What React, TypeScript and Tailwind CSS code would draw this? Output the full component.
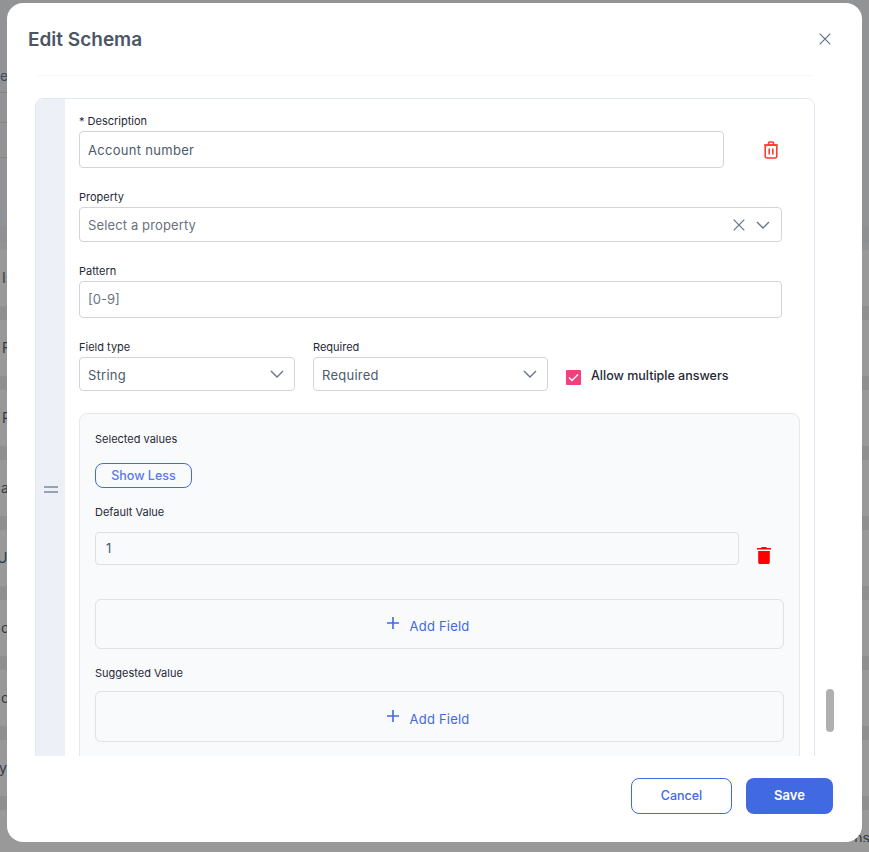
const rows = [
  { left: "Is", right: "", pad: "pl-[2px]" },
  { left: "F", right: "", pad: "pl-[2px]" },
  { left: "R", right: "", pad: "pl-[2px]" },
  { left: "a", right: "", pad: "pl-[1px]" },
  { left: "U", right: "", pad: "-ml-[3px]" },
  { left: "c", right: "", pad: "pl-px" },
  { left: "c", right: "", pad: "pl-px" },
  { left: "y", right: "", pad: "-ml-px" },
  { left: "", right: "ns", pad: "" },
];

function Chevron() {
  return (
    <svg width="14" height="8" viewBox="0 0 14 8" fill="none" stroke="#64748b" strokeWidth="1.4">
      <path d="M1 1l6 6 6-6" />
    </svg>
  );
}

function CloseIcon({ size = 12 }: { size?: number }) {
  return (
    <svg width={size} height={size} viewBox="0 0 12 12" fill="none" stroke="#5f7389" strokeWidth="1.2">
      <path d="M.7.7l10.6 10.6M11.3.7L.7 11.3" />
    </svg>
  );
}

function Label({ children }: { children: React.ReactNode }) {
  return <div className="h-[14px] text-[11px] leading-[14px] text-[#1f2937]">{children}</div>;
}

function SelectBox({ value, className }: { value: string; className: string }) {
  return (
    <div className={`flex h-[34px] items-center justify-between rounded border border-[#d1d5db] pl-2 pr-[10px] text-[13px] tracking-[0.25px] text-[#4b5b6b] ${className}`}>
      <span className="pt-[3px]">{value}</span>
      <Chevron />
    </div>
  );
}

function AddField({ className, textClass }: { className: string; textClass: string }) {
  return (
    <div className={`flex w-[689px] items-center justify-center gap-[10px] rounded-md border border-[#dfe1e6] pr-[24px] text-[13px] text-[#4169e1] ${className}`}>
      <svg className="mb-[2px]" width="14" height="14" viewBox="0 0 14 14" fill="none" stroke="#4169e1" strokeWidth="1.6">
        <path d="M7 1v12M1 7h12" />
      </svg>
      <span className={`tracking-[0.2px] ${textClass}`}>Add Field</span>
    </div>
  );
}

export default function App() {
  return (
    <div className="relative h-[852px] w-[869px] overflow-hidden bg-[#999999] font-['Inter',sans-serif]">
      {/* Page behind the dialog */}
      <div className="flex h-[842px] flex-col overflow-hidden">
        <div className="h-[250px] shrink-0 bg-[#929394]">
          <div className="h-[66px]" />
          <div className="h-[27px] w-[7px] overflow-hidden border-b border-[#858585] text-sm text-[#3d4a5c]">e</div>
          <div className="h-[30px] w-[7px] border-b border-[#858585]" />
          <div className="h-[35px] w-[7px] border-b border-[#858585]" />
          <div className="mt-[48px] h-[14px] w-[2px] overflow-hidden text-[11px] leading-[14px] text-[#4a90d9]">:</div>
          <div className="mt-[6px] h-[17px] bg-[#8f9091]" />
        </div>
        {rows.map((row, i) => (
          <div key={i} className="flex h-[70px] shrink-0 flex-col">
            <div className="flex h-[56px] shrink-0 items-center justify-between text-sm text-[#333a45]">
              <div className="w-[7px] overflow-hidden">
                <span className={`block whitespace-nowrap ${row.pad}`}>{row.left}</span>
              </div>
              <span className="mr-[-1px]">{row.right}</span>
            </div>
            <div className="h-[14px] shrink-0 bg-[#8f8f8f]" />
          </div>
        ))}
      </div>

      {/* Dialog */}
      <div className="absolute left-[7px] top-[3px] flex h-[839px] w-[855px] flex-col overflow-hidden rounded-2xl bg-white">
        <div className="flex h-[72px] shrink-0 items-start justify-between pl-[21px] pr-[31px] pt-[24px]">
          <h2 className="text-[19px] font-semibold leading-[26px] text-[#4b5563]">Edit Schema</h2>
          <div className="pt-[6px]">
            <CloseIcon />
          </div>
        </div>

        <div className="relative h-[681px] shrink-0 overflow-hidden">
          <div className="ml-[30px] h-px w-[776px] bg-[#f8f8f8]" />
          <div className="ml-[28px] mt-[22px] flex h-[782px] w-[780px] overflow-hidden rounded-lg border border-[#e2e8f0]">
            <div className="flex w-[29px] shrink-0 flex-col items-center justify-center gap-[3px] bg-[#edf1f7]">
              <div className="h-[2px] w-[14px] bg-[#94a3b8]" />
              <div className="h-[2px] w-[14px] bg-[#94a3b8]" />
            </div>

            <div className="flex-1 pl-[14px] pt-[15px]">
              <Label>* Description</Label>
              <div className="mt-[3px] flex items-center">
                <div className="flex h-[37px] w-[645px] items-center rounded border border-[#d1d5db] pl-2 pt-[2px] text-[13px] tracking-[0.3px] text-[#4b5b6b]">
                  Account number
                </div>
                <svg className="ml-[39px]" width="16" height="18" viewBox="0 0 16 18" fill="none" stroke="#ff3b30" strokeWidth="1.6">
                  <path d="M1 4h14M5.5 4V2.2c0-.7.5-1.2 1.2-1.2h2.6c.7 0 1.2.5 1.2 1.2V4" />
                  <rect x="2.200" y="4" width="11.600" height="13" rx="2" />
                  <path d="M6.200 7.500v6M9.800 7.500v6" />
                </svg>
              </div>

              <div className="mt-[22px]">
                <Label>Property</Label>
              </div>
              <div className="mt-[3px] flex h-[35px] w-[703px] items-center rounded border border-[#d1d5db] pl-2 pr-[11px] text-[13px] tracking-[0.13px] text-[#6b7280]">
                <span className="flex-1 pt-[2px]">Select a property</span>
                <CloseIcon />
                <div className="ml-[11px]">
                  <Chevron />
                </div>
              </div>

              <div className="mt-[22px]">
                <Label>Pattern</Label>
              </div>
              <div className="mt-[3px] flex h-[37px] w-[703px] items-center rounded border border-[#d1d5db] pl-2 text-[13px] text-[#6b7280]">
                [0-9]
              </div>

              <div className="mt-[22px] flex">
                <div className="w-[216px]">
                  <Label>Field type</Label>
                  <SelectBox value="String" className="mt-[3px] w-[216px]" />
                </div>
                <div className="ml-[18px] w-[235px]">
                  <Label>Required</Label>
                  <SelectBox value="Required" className="mt-[3px] w-[235px]" />
                </div>
                <div className="ml-[18px] mt-[17px] flex h-[34px] items-center">
                  <div className="mt-[7px] flex h-[15px] w-[15px] items-center justify-center rounded-[1px] bg-[#f43f7e]">
                    <svg width="11" height="9" viewBox="0 0 11 9" fill="none" stroke="#ffffff" strokeWidth="1.4">
                      <path d="M1 4.500l3 3 6-6" />
                    </svg>
                  </div>
                  <span className="ml-[10px] mt-[4px] text-[12.5px] font-medium text-[#1f2937]">Allow multiple answers</span>
                </div>
              </div>

              <div className="mt-[22px] h-[500px] w-[721px] rounded-lg border border-[#e5e7eb] bg-[#f9fafc] pl-[15px] pt-[18px]">
                <Label>Selected values</Label>
                <button className="mt-[17px] block h-[25px] w-[97px] rounded-lg border border-[#4169e1] pt-px text-[12.5px] font-medium text-[#5b79e6]">
                  Show Less
                </button>
                <div className="mt-[17px]">
                  <Label>Default Value</Label>
                </div>
                <div className="mt-[13px] flex items-start">
                  <div className="flex h-[33px] w-[644px] items-center rounded border border-[#dcdfe4] pl-[10px] text-[13px] text-[#4b5b6b]">
                    1
                  </div>
                  <svg className="ml-[18px] mt-[15px]" width="14" height="17" viewBox="0 0 14 17" fill="#ff0000">
                    <path d="M5 0h4l1 1h4v1.500H0V1h4z" />
                    <path d="M1.200 4h11.600v11.500c0 .8-.7 1.500-1.500 1.500H2.700c-.8 0-1.500-.7-1.500-1.500z" />
                  </svg>
                </div>
                <AddField className="mt-[34px] h-[50px]" textClass="mt-[5px]" />
                <div className="mt-[17px]">
                  <Label>Suggested Value</Label>
                </div>
                <AddField className="mt-[11px] h-[51px]" textClass="mt-[6px]" />
              </div>
            </div>
          </div>
          <div className="absolute left-[819px] top-[614px] h-[43px] w-[8px] rounded-full bg-[#b0b0b0]" />
        </div>

        <div className="flex flex-1 items-start justify-end gap-[14px] pr-[29px] pt-[22px]">
          <button className="h-[36px] w-[101px] rounded-lg border border-[#4169e1] text-[12.5px] font-medium text-[#4169e1]">
            Cancel
          </button>
          <button className="h-[36px] w-[87px] rounded-lg bg-[#4169e1] text-[13px] font-semibold text-white">
            Save
          </button>
        </div>
      </div>
    </div>
  );
}
